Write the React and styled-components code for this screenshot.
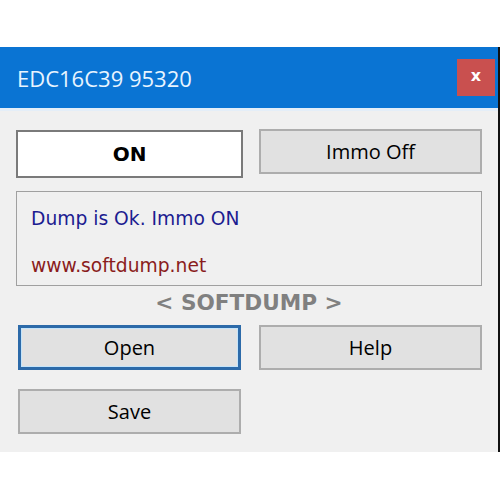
import React from "react";
import styled, { createGlobalStyle } from "styled-components";

const GlobalStyle = createGlobalStyle`
  html, body {
    margin: 0;
    padding: 0;
    background: #ffffff;
  }
`;

const Page = styled.div`
  padding-top: 47px;
  width: 500px;
  height: 500px;
  box-sizing: border-box;
`;

const Window = styled.div`
  width: 500px;
  height: 405px;
  box-sizing: border-box;
  background: #f0f0f0;
  border-right: 2px solid #111;
  display: flex;
  flex-direction: column;
`;

const TitleBar = styled.div`
  height: 61px;
  background: #0a74d3;
  border-bottom: 3px solid #e4eef8;
  display: flex;
  align-items: center;
  justify-content: space-between;
  padding-left: 17px;
  padding-right: 3px;
`;

const Title = styled.span`
  font-family: "Open Sans", "DejaVu Sans", sans-serif;
  font-size: 22px;
  color: #e8f4ff;
`;

const CloseButton = styled.div`
  width: 38px;
  height: 37px;
  background: #c9504f;
  color: #fff;
  font-family: "DejaVu Sans", sans-serif;
  font-weight: bold;
  font-size: 16px;
  display: flex;
  align-items: center;
  justify-content: center;
  line-height: 1;
  padding-bottom: 3px;
  box-sizing: border-box;
`;

const Body = styled.div`
  padding: 18px 16px 0 16px;
  display: flex;
  flex-direction: column;
`;

const TopRow = styled.div`
  display: grid;
  grid-template-columns: 227px 1fr;
  column-gap: 16px;
  align-items: start;
`;

const StatusBox = styled.div`
  height: 48px;
  margin-top: 1px;
  box-sizing: border-box;
  border: 2px solid #7a7a7a;
  background: #fff;
  display: flex;
  align-items: center;
  justify-content: center;
  font-family: "DejaVu Sans", sans-serif;
  font-weight: bold;
  font-size: 20px;
  color: #000;
`;

const Button = styled.div`
  height: 45px;
  box-sizing: border-box;
  background: #e1e1e1;
  border: ${(p) => (p.$focused ? "3px solid #2c6aa9" : "2px solid #adadad")};
  box-shadow: ${(p) => (p.$focused ? "inset 0 0 0 1px #c4e4fa" : "none")};
  display: flex;
  align-items: center;
  justify-content: center;
  font-family: "Open Sans", "DejaVu Sans", sans-serif;
  font-size: 20px;
  color: #000;
`;

const InfoBox = styled.div`
  margin-top: 13px;
  height: 95px;
  box-sizing: border-box;
  border: 1px solid #a0a0a0;
  padding: 14px 0 0 14px;
  display: flex;
  flex-direction: column;
  gap: 21px;
  font-family: "DejaVu Sans", sans-serif;
  font-size: 18.7px;
`;

const InfoLine = styled.div`
  color: ${(p) => p.$color};
  line-height: 26px;
`;

const Brand = styled.div`
  text-align: center;
  font-family: "DejaVu Sans", sans-serif;
  font-weight: bold;
  font-size: 21.6px;
  color: #808080;
  height: 39px;
  line-height: 34px;
`;

const ButtonGrid = styled.div`
  display: grid;
  grid-template-columns: 223px 223px;
  column-gap: 18px;
  row-gap: 19px;
  margin-left: 2px;
`;

export default function App() {
  return (
    <Page>
      <GlobalStyle />
      <Window>
        <TitleBar>
          <Title>EDC16C39 95320</Title>
          <CloseButton>x</CloseButton>
        </TitleBar>
        <Body>
          <TopRow>
            <StatusBox>ON</StatusBox>
            <Button>Immo Off</Button>
          </TopRow>
          <InfoBox>
            <InfoLine $color="#1c1c90">Dump is Ok. Immo ON</InfoLine>
            <InfoLine $color="#8a1c1c">www.softdump.net</InfoLine>
          </InfoBox>
          <Brand>&lt; SOFTDUMP &gt;</Brand>
          <ButtonGrid>
            <Button $focused>Open</Button>
            <Button>Help</Button>
            <Button>Save</Button>
          </ButtonGrid>
        </Body>
      </Window>
    </Page>
  );
}
